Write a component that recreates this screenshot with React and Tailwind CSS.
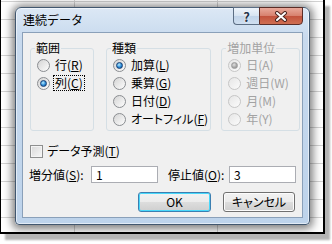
import React from 'react'

function Radio({ checked, disabled }) {
  return (
    <span
      className={`flex h-[13px] w-[13px] shrink-0 items-center justify-center rounded-full border ${
        disabled
          ? 'border-[#c6c6c6] bg-[linear-gradient(135deg,#e6e6e6,#fbfbfb)]'
          : 'border-[#8a8d91] bg-[linear-gradient(135deg,#d4d4d4,#fdfdfd)]'
      }`}
    >
      {checked && (
        <span
          className={`h-[7px] w-[7px] rounded-full border ${
            disabled
              ? 'border-[#9c9c9c] bg-[radial-gradient(circle_at_40%_35%,#e0e0e0,#a4a4a4_60%,#8a8a8a)]'
              : 'border-[#173f73] bg-[radial-gradient(circle_at_40%_35%,#b8ecff,#2a8ad6_55%,#0d4a91)]'
          }`}
        />
      )}
    </span>
  )
}

function Option({ label, hotkey, checked, disabled, focused }) {
  return (
    <div className="flex h-[18px] items-center gap-[3px] pl-[6px]">
      <Radio checked={checked} disabled={disabled} />
      <span
        className={`whitespace-nowrap leading-[14px] ${disabled ? 'text-[#a3a3a3]' : 'text-black'} ${
          focused ? 'border border-dotted border-black px-[1px]' : 'px-[2px]'
        }`}
      >
        {label}(
        {disabled ? hotkey : <u className="underline-offset-[1px]">{hotkey}</u>})
      </span>
    </div>
  )
}

function Group({ title, disabled, width, children }) {
  return (
    <fieldset
      className={`h-[90px] rounded-[3px] border border-[#d5dfe5] ${width}`}
    >
      <legend
        className={`ml-[4px] px-[1px] leading-[14px] ${disabled ? 'text-[#a3a3a3]' : 'text-black'}`}
      >
        {title}
      </legend>
      <div className="pt-[1px]">{children}</div>
    </fieldset>
  )
}

function TextBox({ value }) {
  return (
    <div className="flex h-[17px] w-[67px] items-center border border-[#abadb3] bg-white pl-[4px] leading-[14px]">
      {value}
    </div>
  )
}

export default function App() {
  return (
    <div className="h-[244px] w-[332px] overflow-hidden bg-white font-['Noto_Sans_CJK_JP','Liberation_Sans',sans-serif] text-[12px]">
      {/* screenshot frame with spreadsheet behind the dialog */}
      <div className="h-[234px] w-[325px] overflow-hidden border-b-2 border-l border-r-2 border-black bg-white bg-[linear-gradient(#d2d2d2_1px,transparent_1px),linear-gradient(90deg,#d2d2d2_1px,transparent_1px)] bg-[length:143px_18px] bg-[position:73px_1px] pl-[14px] pt-[7px] shadow-[5px_6px_2px_#b4b4b4]">
        {/* dialog */}
        <div className="flex h-[218px] w-[295px] flex-col rounded-t-[6px] rounded-b-[4px] border border-[#41576f] bg-[linear-gradient(180deg,#dce8f5,#c8daee_30px,#bdd3eb)] px-[6px] shadow-[0_1px_9px_3px_rgba(0,0,0,0.5),inset_0_0_0_1px_rgba(255,255,255,0.55)]">
          {/* title bar */}
          <div className="flex h-[24px] shrink-0">
            <div className="self-center pl-[1px] text-[12px] leading-[14px] text-black">
              連続データ
            </div>
            <div className="ml-auto mt-[-1px] flex h-[18px]">
              <div className="flex w-[26px] items-center justify-center rounded-bl-[4px] border border-r-0 border-[#5c6e84] bg-[linear-gradient(180deg,#eef4fa,#d6e3f1_50%,#c0d3e8_50%,#cfdff0)] text-[13px] leading-none font-bold text-[#25344a] [text-shadow:0_0_2px_#fff,0_0_1px_#fff]">
                ?
              </div>
              <div className="flex w-[44px] items-center justify-center rounded-br-[4px] border border-[#5b2d27] bg-[linear-gradient(180deg,#e9a99b,#d7806d_50%,#c2513c_50%,#cf6f52)]">
                <svg width="14" height="11" viewBox="0 0 14 11">
                  <path d="M3 2 L11 9 M11 2 L3 9" stroke="#4a2520" strokeWidth="4" strokeLinecap="round" />
                  <path d="M3 2 L11 9 M11 2 L3 9" stroke="#fff" strokeWidth="2" strokeLinecap="round" />
                </svg>
              </div>
            </div>
          </div>

          {/* client area */}
          <div className="flex h-[186px] flex-col border border-[#8aa0b9] bg-[#f0f0f0] text-black [font-feature-settings:'palt']">
            <div className="ml-[7px] mt-[8px] flex gap-[12px]">
              <Group title="範囲" width="w-[64px]">
                <Option label="行" hotkey="R" />
                <Option label="列" hotkey="C" checked focused />
              </Group>
              <Group title="種類" width="w-[104px]">
                <Option label="加算" hotkey="L" checked />
                <Option label="乗算" hotkey="G" />
                <Option label="日付" hotkey="D" />
                <Option label="オートフィル" hotkey="F" />
              </Group>
              <div className="-ml-[2px]">
                <Group title="増加単位" width="w-[79px]" disabled>
                  <Option label="日" hotkey="A" checked disabled />
                  <Option label="週日" hotkey="W" disabled />
                  <Option label="月" hotkey="M" disabled />
                  <Option label="年" hotkey="Y" disabled />
                </Group>
              </div>
            </div>

            {/* checkbox */}
            <div className="ml-[7px] mt-[12px] flex h-[16px] items-center gap-[4px]">
              <span className="h-[13px] w-[13px] border border-[#8e8f8f] bg-[linear-gradient(135deg,#d9d9d9,#f7f7f7)] shadow-[inset_0_0_0_1px_#f4f4f4]" />
              <span className="leading-[14px]">
                データ予測(<u>T</u>)
              </span>
            </div>

            {/* values */}
            <div className="ml-[6px] mt-[7px] flex h-[17px] items-center">
              <span className="w-[62px] whitespace-nowrap leading-[14px]">
                増分値(<u>S</u>):
              </span>
              <TextBox value="1" />
              <span className="ml-[10px] w-[61px] whitespace-nowrap leading-[14px]">
                停止値(<u>O</u>):
              </span>
              <TextBox value="3" />
            </div>

            {/* buttons */}
            <div className="mr-[7px] mt-[9px] flex justify-end gap-[12px]">
              <button className="h-[20px] w-[73px] rounded-[3px] border border-[#3c7fb1] bg-[linear-gradient(180deg,#f2f2f2,#ebebeb_50%,#dddddd_50%,#cfcfcf)] leading-[14px] shadow-[inset_0_0_0_1px_#48d8fb]">
                OK
              </button>
              <button className="h-[20px] w-[72px] rounded-[3px] border border-[#707070] bg-[linear-gradient(180deg,#f2f2f2,#ebebeb_50%,#dddddd_50%,#cfcfcf)] leading-[14px] shadow-[inset_0_0_0_1px_#fcfcfc]">
                キャンセル
              </button>
            </div>
          </div>
        </div>
      </div>
    </div>
  )
}
